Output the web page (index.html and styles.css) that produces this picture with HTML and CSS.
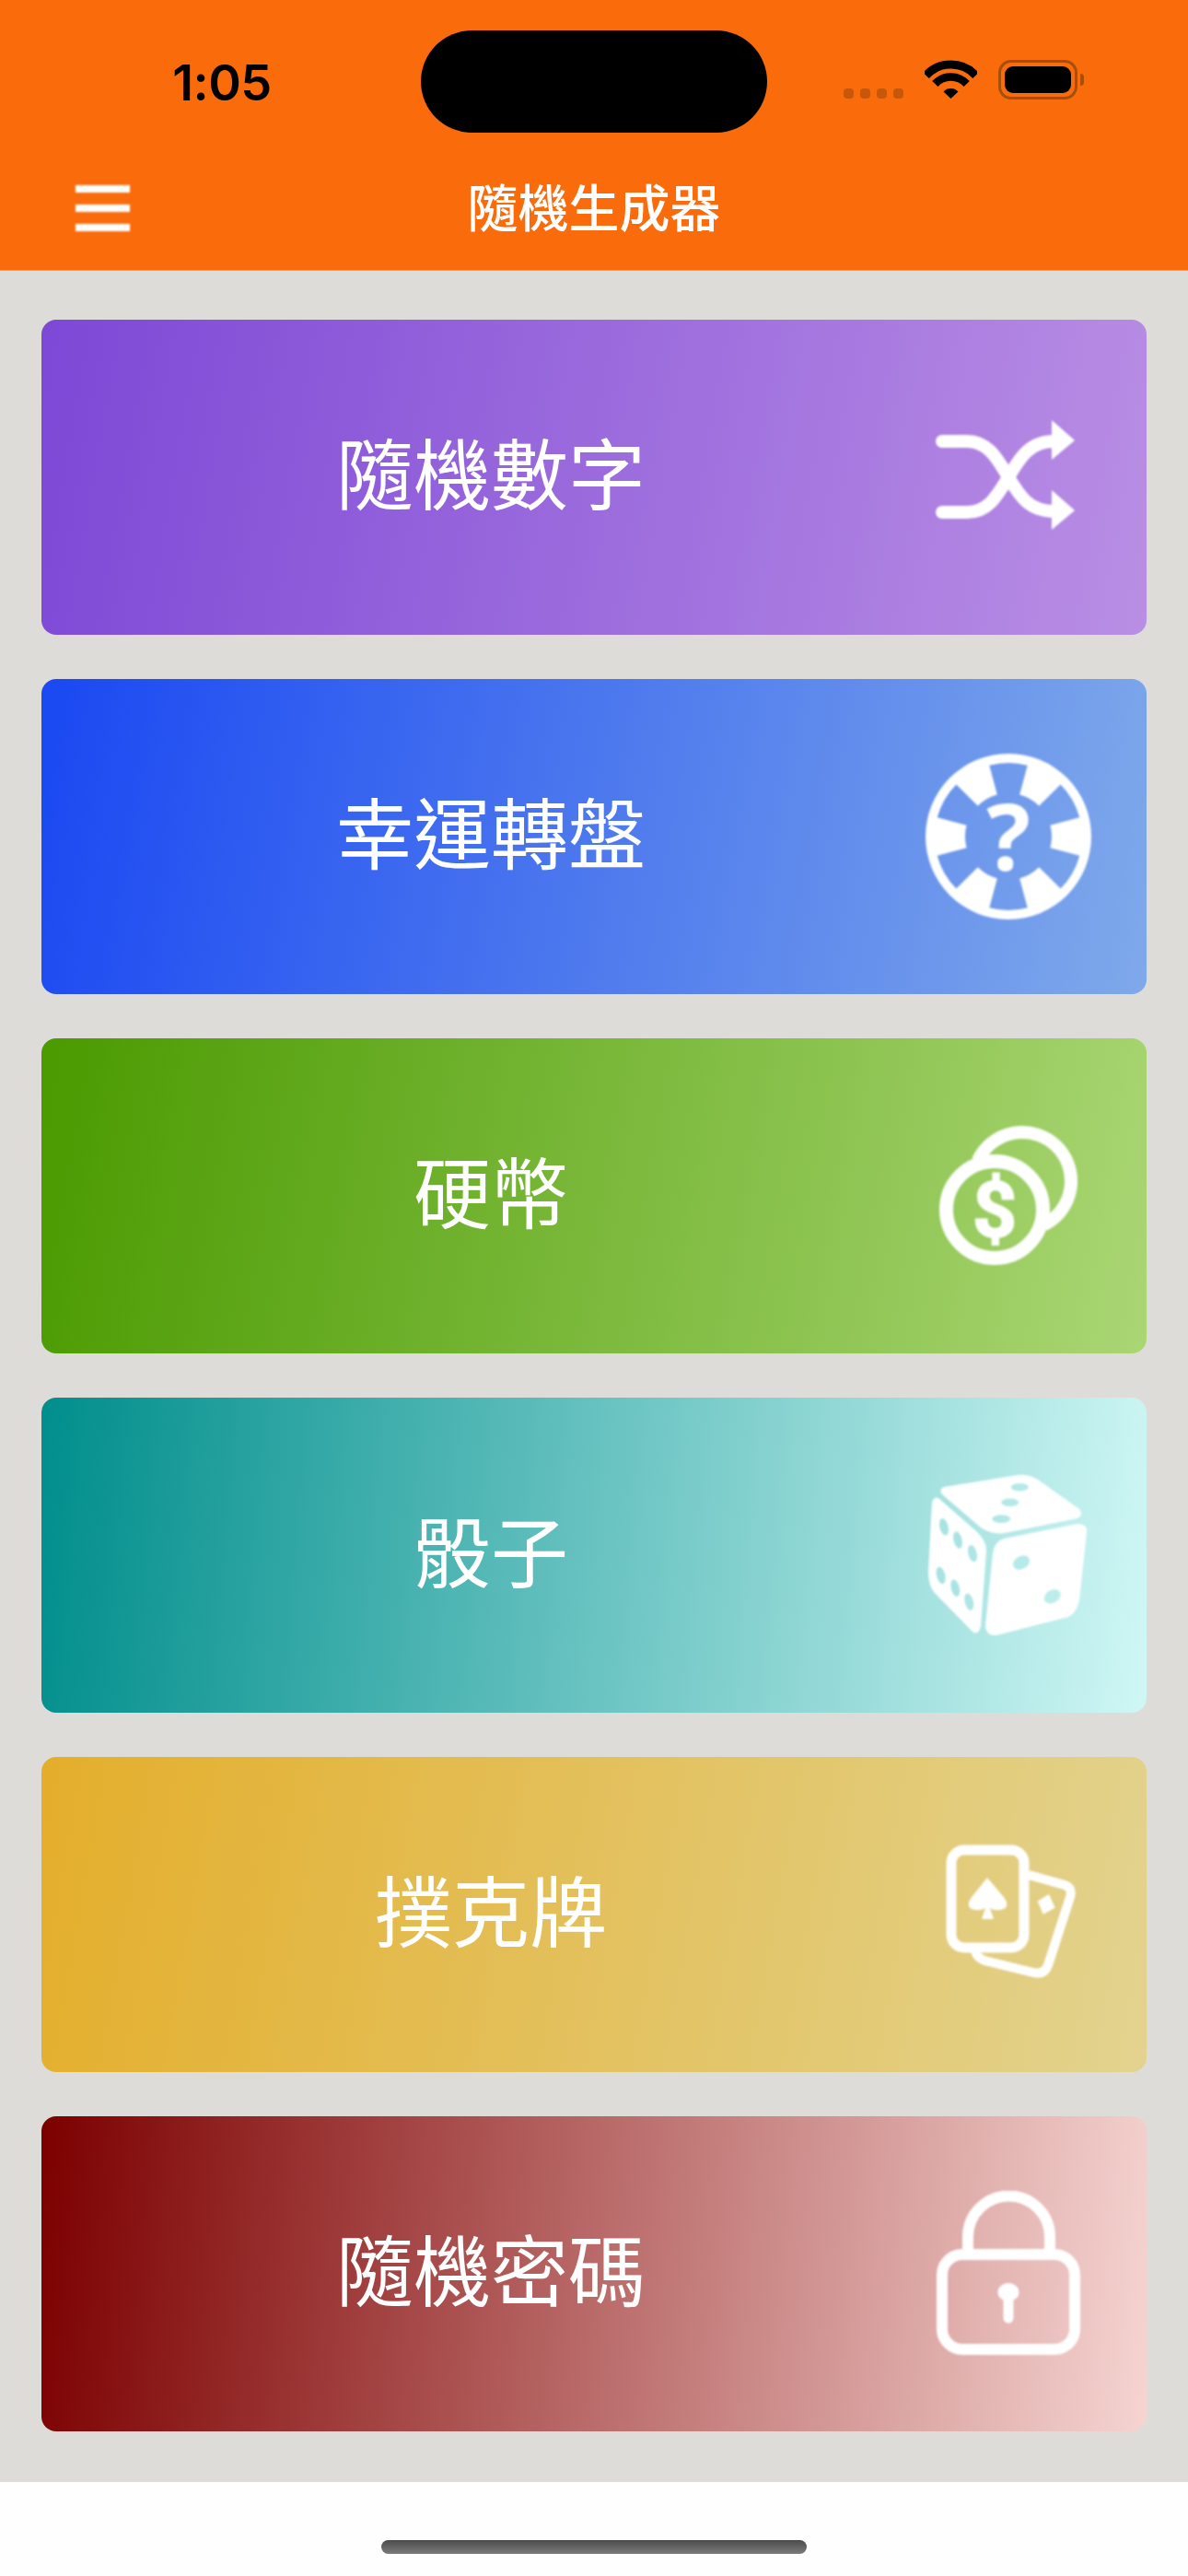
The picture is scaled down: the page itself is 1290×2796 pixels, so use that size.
FILE: index.html
```html
<!DOCTYPE html>
<html lang="zh-Hant">
<head>
    <meta charset="utf-8">
    <title>隨機生成器</title>
    <link rel="stylesheet" href="styles.css">
</head>
<body>
    <div class="app">
        <header class="header">
            <div class="status">
                <div class="time">1:05</div>
                <div class="island"></div>
                <div class="status-icons">
                    <div class="signal"><span></span><span></span><span></span><span></span></div>
                    <svg class="wifi" viewBox="0 0 57 42" width="57" height="42">
                        <path d="M1.5 16.8A37 37 0 0 1 55.5 16.8" fill="none" stroke="#000" stroke-width="9"/>
                        <path d="M11.3 26A23.5 23.5 0 0 1 45.7 26" fill="none" stroke="#000" stroke-width="8.5"/>
                        <path d="M28.5 42L20.5 34.5A11 11 0 0 1 36.5 34.5Z" fill="#000"/>
                    </svg>
                    <div class="battery"><div class="battery-fill"></div></div>
                    <div class="battery-cap"></div>
                </div>
            </div>
            <div class="nav">
                <div class="menu"><span></span><span></span><span></span></div>
                <h1 class="title">隨機生成器</h1>
                <div class="nav-right"></div>
            </div>
        </header>

        <main class="list">
            <div class="card card-number">
                <div class="label">隨機數字</div>
                <svg class="icon" viewBox="0 0 180 180" width="180" height="180">
                    <path d="M18 51H45C68 51 78 70 90 90C102 110 112 127 140 127" fill="none" stroke="#fff" stroke-width="14" stroke-linecap="round"/>
                    <path d="M18 128H45C68 128 78 110 90 90C102 70 112 51 140 51" fill="none" stroke="#fff" stroke-width="14" stroke-linecap="round"/>
                    <path d="M137 28L162 50L137 71Z" fill="#fff"/>
                    <path d="M137 104L162 126L137 147Z" fill="#fff"/>
                </svg>
            </div>

            <div class="card card-wheel">
                <div class="label">幸運轉盤</div>
                <svg class="icon" viewBox="0 0 180 180" width="180" height="180">
                    <path fill="#fff" fill-rule="evenodd" d="M0 90A90 90 0 1 1 180 90A90 90 0 1 1 0 90ZM69.3 12.7A80 80 0 0 1 110.7 12.7L102.2 44.6A47 47 0 0 1 123.2 56.8L146.6 33.4A80 80 0 0 1 167.3 69.3L135.4 77.8A47 47 0 0 1 135.4 102.2L167.3 110.7A80 80 0 0 1 146.6 146.6L123.2 123.2A47 47 0 0 1 102.2 135.4L110.7 167.3A80 80 0 0 1 69.3 167.3L77.8 135.4A47 47 0 0 1 56.8 123.2L33.4 146.6A80 80 0 0 1 12.7 110.7L44.6 102.2A47 47 0 0 1 44.6 77.8L12.7 69.3A80 80 0 0 1 33.4 33.4L56.8 56.8A47 47 0 0 1 77.8 44.6Z"/>
                    <text class="icon-mark mark-question" x="90" y="127" font-size="100">?</text>
                </svg>
            </div>

            <div class="card card-coin">
                <div class="label">硬幣</div>
                <svg class="icon" viewBox="0 0 180 180" width="180" height="180">
                    <path d="M56.8 52A53 53 0 1 1 128.6 121.4" fill="none" stroke="#fff" stroke-width="14"/>
                    <circle cx="75" cy="105" r="52.5" fill="none" stroke="#fff" stroke-width="15"/>
                    <text class="icon-mark mark-dollar" x="75" y="134" font-size="84">$</text>
                </svg>
            </div>

            <div class="card card-dice">
                <div class="label">骰子</div>
                <svg class="icon" viewBox="0 0 180 180" width="180" height="180">
                    <mask id="dice-pips">
                        <rect width="180" height="180" fill="#fff"/>
                        <g fill="#000">
                            <ellipse cx="102.3" cy="16.2" rx="9.5" ry="4.2"/>
                            <ellipse cx="91.7" cy="32.8" rx="9.5" ry="4.2"/>
                            <ellipse cx="82.3" cy="50.6" rx="10" ry="4.4"/>
                            <ellipse cx="20" cy="59.3" rx="4.6" ry="9.4" transform="rotate(-14 20 59.3)"/>
                            <ellipse cx="35" cy="73.5" rx="4.6" ry="9.4" transform="rotate(-14 35 73.5)"/>
                            <ellipse cx="51" cy="88.1" rx="4.6" ry="9.4" transform="rotate(-14 51 88.1)"/>
                            <ellipse cx="16.7" cy="111.9" rx="4.6" ry="9.4" transform="rotate(-14 16.7 111.9)"/>
                            <ellipse cx="32.3" cy="125.7" rx="4.6" ry="9.4" transform="rotate(-14 32.3 125.7)"/>
                            <ellipse cx="47.3" cy="140.7" rx="4.6" ry="9.4" transform="rotate(-14 47.3 140.7)"/>
                            <ellipse cx="104" cy="98" rx="9.6" ry="7" transform="rotate(-30 104 98)"/>
                            <ellipse cx="137.7" cy="134.8" rx="9.6" ry="7" transform="rotate(-30 137.7 134.8)"/>
                        </g>
                    </mask>
                    <g fill="#fff" mask="url(#dice-pips)">
                        <path d="M20 16L100 3Q112 2 122 8L167 40Q172 46 165 50L86 66Q72 68 60 60L18 24Q14 18 20 16Z"/>
                        <path d="M7 33Q9 26 14 28L55 64Q66 74 66 85L60 167Q58 176 52 174L9 130Q3 122 3 108Z"/>
                        <path d="M73 88Q75 75 85 72L165 56Q176 56 175 65L167 139Q164 153 155 157L77 177Q66 178 65 167Z"/>
                    </g>
                </svg>
            </div>

            <div class="card card-poker">
                <div class="label">撲克牌</div>
                <svg class="icon" viewBox="0 0 180 180" width="180" height="180">
                    <rect x="28" y="20" width="79" height="106" rx="14" fill="none" stroke="#fff" stroke-width="11"/>
                    <path d="M112 47L151 58Q160 61 157 71L133 145Q129 156 117 153L64 140Q56 137 54 130" fill="none" stroke="#fff" stroke-width="10"/>
                    <path d="M67 50L84 70Q92 80 85 84Q76 87 70 83L74 95H61L65 83Q58 87 50 84Q43 80 51 70Z" fill="#fff"/>
                    <path d="M134 68L140.7 82.7L127.7 89.8L121.7 75.6Z" fill="#fff"/>
                </svg>
            </div>

            <div class="card card-password">
                <div class="label">隨機密碼</div>
                <svg class="icon" viewBox="0 0 180 180" width="180" height="180">
                    <rect x="18" y="69" width="144" height="103" rx="22" fill="none" stroke="#fff" stroke-width="12"/>
                    <path d="M46 66V50A44.5 44.5 0 0 1 135 50V66" fill="none" stroke="#fff" stroke-width="12"/>
                    <ellipse cx="90" cy="110" rx="11.5" ry="10" fill="#fff"/>
                    <path d="M90 112V138" fill="none" stroke="#fff" stroke-width="11" stroke-linecap="round"/>
                </svg>
            </div>
        </main>

        <footer class="home">
            <div class="home-bar"></div>
        </footer>
    </div>
</body>
</html>
```

FILE: styles.css
```css
* {
    box-sizing: border-box;
}
body {
    margin: 0;
    font-family: "Liberation Sans", "Noto Sans CJK TC", sans-serif;
    background-color: #fff;
}
.app {
    display: flex;
    flex-direction: column;
    width: 1290px;
    height: 2796px;
    overflow: hidden;
}

/* header */
.header {
    height: 294px;
    background-color: #fa6c0b;
    border-bottom: 1px solid #b3ada6;
}
.status {
    display: flex;
    height: 144px;
    padding-top: 33px;
}
.time {
    width: 457px;
    padding: 30px 0 0 25px;
    font-family: Inter, "Liberation Sans", sans-serif;
    font-size: 54px;
    font-weight: 600;
    line-height: 54px;
    text-align: center;
    letter-spacing: -0.5px;
    color: #000;
}
.island {
    width: 376px;
    height: 111px;
    border-radius: 56px;
    background-color: #000;
}
.status-icons {
    display: flex;
    align-items: flex-start;
    padding: 32px 0 0 83px;
}
.signal {
    display: flex;
    gap: 7px;
    margin-top: 31px;
}
.signal span {
    width: 11px;
    height: 11px;
    border-radius: 4px;
    background-color: #c95709;
}
.wifi {
    margin-left: 23px;
}
.battery {
    width: 86px;
    height: 43px;
    margin-left: 23px;
    padding: 4px;
    border: 3px solid #a54f0c;
    border-radius: 14px;
}
.battery-fill {
    height: 100%;
    border-radius: 9px;
    background-color: #000;
}
.battery-cap {
    width: 4px;
    height: 13px;
    margin: 15px 0 0 3px;
    border-radius: 0 4px 4px 0;
    background-color: #a54f0c;
}
.nav {
    display: grid;
    grid-template-columns: 1fr auto 1fr;
    padding-top: 57px;
}
.menu {
    display: flex;
    flex-direction: column;
    gap: 13px;
    width: 59px;
    height: 51px;
    margin-left: 82px;
    filter: blur(1.2px);
}
.menu span {
    height: 8px;
    background-color: #fff;
}
.title {
    margin: 0;
    font-size: 55px;
    font-weight: 500;
    line-height: 52px;
    color: #fff;
}

/* list of cards */
.list {
    display: flex;
    flex-direction: column;
    gap: 48px;
    height: 2400px;
    padding: 53px 45px 0;
    background-color: #dddcd8;
}
.card {
    display: flex;
    align-items: center;
    height: 342px;
    padding: 0 60px 0 16px;
    border-radius: 16px;
}
.label {
    flex: 1;
    font-size: 84px;
    font-weight: 400;
    line-height: 84px;
    text-align: center;
    color: #fff;
}
.icon {
    flex-shrink: 0;
    filter: blur(0.9px);
}
.icon-mark {
    text-anchor: middle;
    fill: #fff;
}
.mark-question {
    font-family: "Open Sans", "Liberation Sans", sans-serif;
    font-weight: 700;
}
.mark-dollar {
    font-family: Roboto, "Liberation Sans", sans-serif;
    font-weight: 700;
    stroke: #fff;
    stroke-width: 2px;
}
.card-number {
    background-image: linear-gradient(100deg, #7d48d6, #b98ee4);
}
.card-wheel {
    background-image: linear-gradient(100deg, #1a48f2, #7fa9ea);
}
.card-coin {
    background-image: linear-gradient(100deg, #4a9a00, #aad674);
}
.card-dice {
    background-image: linear-gradient(95deg, #008e8c, #cff7f5);
}
.card-poker {
    background-image: linear-gradient(100deg, #e4ae2b, #e2d38f);
}
.card-password {
    background-image: linear-gradient(95deg, #7c0000, #f5d4d1);
}

/* home indicator */
.home {
    flex: 1;
    padding-top: 63px;
    background-color: #fefefe;
}
.home-bar {
    width: 462px;
    height: 15px;
    margin: 0 auto;
    border-radius: 8px;
    background-image: linear-gradient(#4b4b4b, #7b7b7b);
}
```
